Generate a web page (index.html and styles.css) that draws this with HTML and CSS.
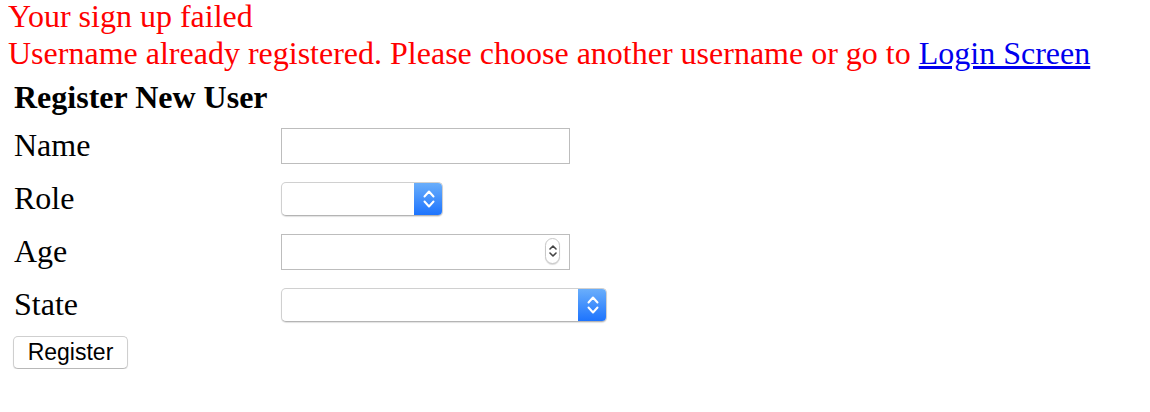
FILE: index.html
```html
<!DOCTYPE html>
<html>
<head>
<meta charset="utf-8">
<title>Register</title>
<link rel="stylesheet" href="styles.css">
</head>
<body>
<div class="error">
  <div>Your sign up failed</div>
  <div>Username already registered. Please choose another username or go to <a href="#">Login Screen</a></div>
</div>
<form class="form">
  <div class="title">Register New User</div>
  <div class="grid">
    <label class="label">Name</label>
    <div class="cell"><input class="text" type="text"></div>

    <label class="label">Role</label>
    <div class="cell">
      <div class="select select-role">
        <select class="select-box"></select>
        <span class="select-arrow"><svg width="14" height="20" viewBox="0 0 14 20"><path d="M2.5 7.5 L7 2.5 L11.5 7.5 M2.5 12.5 L7 17.5 L11.5 12.5" fill="none" stroke="#fff" stroke-width="2" stroke-linecap="round" stroke-linejoin="round"/></svg></span>
      </div>
    </div>

    <label class="label">Age</label>
    <div class="cell">
      <div class="number">
        <input class="text" type="text">
        <span class="spin"><svg width="10" height="18" viewBox="0 0 10 18"><path d="M2 7 L5 4 L8 7 M2 11 L5 14 L8 11" fill="none" stroke="#444" stroke-width="1.6" stroke-linecap="round" stroke-linejoin="round"/></svg></span>
      </div>
    </div>

    <label class="label">State</label>
    <div class="cell">
      <div class="select select-state">
        <select class="select-box"></select>
        <span class="select-arrow"><svg width="14" height="20" viewBox="0 0 14 20"><path d="M2.5 7.5 L7 2.5 L11.5 7.5 M2.5 12.5 L7 17.5 L11.5 12.5" fill="none" stroke="#fff" stroke-width="2" stroke-linecap="round" stroke-linejoin="round"/></svg></span>
      </div>
    </div>
  </div>
  <button class="btn" type="button">Register</button>
</form>
</body>
</html>
```

FILE: styles.css
```css
html, body {
  background: #fff;
}
body {
  margin: 0 8px;
  font-family: "Liberation Serif", "Times New Roman", serif;
  font-size: 32px;
  color: #000;
}
.error {
  color: #ff0000;
  font-size: 32px;
  line-height: 37px;
  margin-top: -2px;
}
.error a {
  color: #0000ee;
  text-decoration: underline;
}
.form {
  margin: 7px 0 0 0;
  padding-left: 6px;
}
.title {
  font-weight: bold;
  line-height: 37px;
}
.grid {
  display: grid;
  grid-template-columns: 267px auto;
  grid-auto-rows: 53px;
  margin-top: 3px;
  align-items: center;
}
.label {
  line-height: 37px;
}
.cell {
  display: flex;
  align-items: center;
}
.text {
  box-sizing: border-box;
  width: 289px;
  height: 36px;
  border: 1px solid #bdbdbd;
  margin: 0;
  padding: 0 6px;
  font-size: 16px;
  background: #fff;
  outline: none;
}
.number {
  position: relative;
  display: flex;
}
.spin {
  position: absolute;
  left: 264px;
  top: 4px;
  width: 15px;
  height: 26px;
  box-sizing: border-box;
  border: 1px solid #c8c8c8;
  border-radius: 8px;
  box-shadow: 0 1px 1px rgba(0,0,0,0.15);
  display: flex;
  align-items: center;
  justify-content: center;
  background: #fff;
}
.select {
  display: flex;
  height: 34px;
  box-sizing: border-box;
  border-radius: 5px;
  border: 1px solid #d0d0d0;
  border-bottom-color: #b4b4b4;
  box-shadow: 0 1px 1px rgba(0,0,0,0.12);
  overflow: hidden;
  background: #fff;
}
.select-role { width: 162px; }
.select-state { width: 326px; }
.select-box {
  appearance: none;
  -webkit-appearance: none;
  border: none;
  background: transparent;
  flex: 1;
  min-width: 0;
  margin: 0;
  padding: 0;
  outline: none;
}
.select-arrow {
  width: 29px;
  flex: none;
  background: linear-gradient(#6cb0fb, #1b72fe);
  display: flex;
  align-items: center;
  justify-content: center;
  margin: -1px -1px -1px 0;
}
.btn {
  margin: 5px 0 0 -1px;
  width: 115px;
  height: 33px;
  box-sizing: border-box;
  background: #fff;
  border: 1px solid #cfcfcf;
  border-bottom-color: #b8b8b8;
  border-radius: 5px;
  box-shadow: 0 1px 1px rgba(0,0,0,0.12);
  font-family: "Liberation Sans", Arial, sans-serif;
  font-size: 23px;
  color: #000;
  padding: 0;
}
```
